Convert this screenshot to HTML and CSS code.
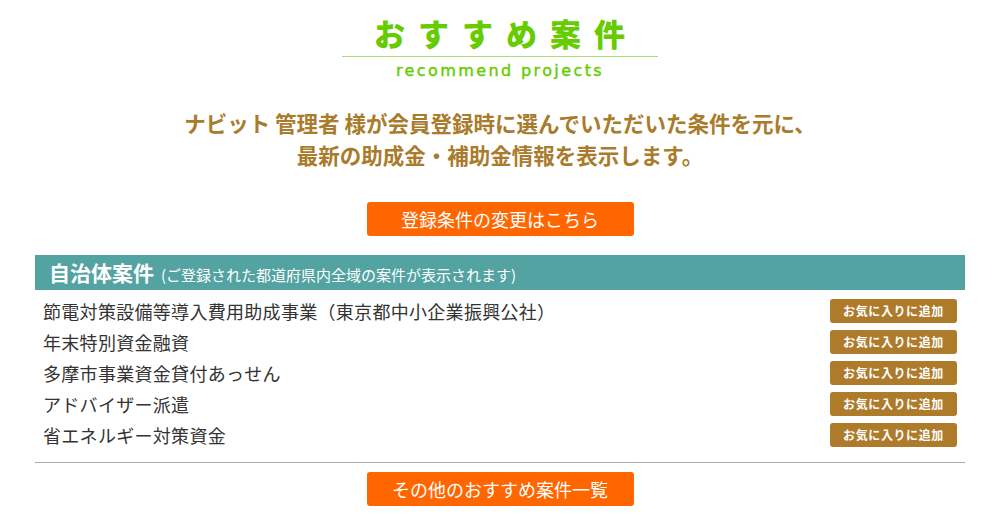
FILE: index.html
```html
<!DOCTYPE html>
<html lang="ja">

<head>
  <meta charset="UTF-8">
  <meta name="viewport" content="width=device-width, initial-scale=1.0">
  <title>おすすめ案件</title>
  <link rel="stylesheet" href="styles.css">
</head>

<body>
  <div class="recommend">
    <div class="recommend__head">
      <h2 class="recommend__title">おすすめ案件</h2>
      <p class="recommend__sub">recommend projects</p>
    </div>

    <p class="intro">ナビット 管理者 様が会員登録時に選んでいただいた条件を元に、<br>最新の助成金・補助金情報を表示します。</p>

    <div class="btn__wrap">
      <a href="/member/edit" class="btn__orange">登録条件の変更はこちら</a>
    </div>

    <div class="box">
      <div class="box__bar">
        <strong>自治体案件</strong>
        <span>(ご登録された都道府県内全域の案件が表示されます)</span>
      </div>
      <ul class="box__list">
        <li>
          <a href="#">節電対策設備等導入費用助成事業（東京都中小企業振興公社）</a>
          <button class="fav">お気に入りに追加</button>
        </li>
        <li>
          <a href="#">年末特別資金融資</a>
          <button class="fav">お気に入りに追加</button>
        </li>
        <li>
          <a href="#">多摩市事業資金貸付あっせん</a>
          <button class="fav">お気に入りに追加</button>
        </li>
        <li>
          <a href="#">アドバイザー派遣</a>
          <button class="fav">お気に入りに追加</button>
        </li>
        <li>
          <a href="#">省エネルギー対策資金</a>
          <button class="fav">お気に入りに追加</button>
        </li>
      </ul>
    </div>

    <div class="btn__wrap btn__wrap--bottom">
      <a href="/projects" class="btn__orange">その他のおすすめ案件一覧</a>
    </div>
  </div>
</body>

</html>
```

FILE: styles.css
```css
body {
  margin: 0;
  background-color: #fff;
  font-family: "Noto Sans CJK JP", "Noto Sans", sans-serif;
  color: #333;
}

.recommend {
  width: 930px;
  margin: 0 auto;
}

.recommend__head {
  display: flex;
  flex-direction: column;
  align-items: center;
  padding-top: 13px;
}

.recommend__title {
  width: 316px;
  margin: 0;
  padding-bottom: 3px;
  padding-left: 12px;
  box-sizing: border-box;
  text-align: center;
  font-size: 31px;
  line-height: 40px;
  font-weight: 900;
  letter-spacing: 13px;
  color: #66cc00;
  border-bottom: 1px solid #a6e070;
}

.recommend__sub {
  margin: 0;
  padding-top: 4px;
  font-family: "DejaVu Sans", sans-serif;
  font-size: 16px;
  line-height: 20px;
  letter-spacing: 2.4px;
  color: #66cc00;
  -webkit-text-stroke: 0.4px #66cc00;
}

.intro {
  margin: 26px 0 0;
  text-align: center;
  font-size: 21.5px;
  line-height: 32px;
  font-weight: 700;
  color: #a97b2b;
}

.btn__wrap {
  display: flex;
  justify-content: center;
  margin-top: 31px;
}

.btn__wrap--bottom {
  margin-top: 9px;
}

.btn__orange {
  display: flex;
  align-items: center;
  justify-content: center;
  width: 267px;
  height: 34px;
  border-radius: 3px;
  background-color: #ff6600;
  color: #fff;
  font-size: 18px;
  text-decoration: none;
}

.box {
  margin-top: 19px;
  border-bottom: 1px solid #aaa;
  padding-bottom: 12px;
}

.box__bar {
  display: flex;
  align-items: baseline;
  height: 35px;
  line-height: 35px;
  padding-left: 14px;
  background-color: #52a3a1;
  color: #fff;
}

.box__bar strong {
  font-size: 21px;
}

.box__bar span {
  margin-left: 7px;
  font-size: 15px;
}

.box__list {
  list-style: none;
  margin: 0;
  padding: 5px 8px 0 8px;
}

.box__list li {
  display: flex;
  align-items: center;
  justify-content: space-between;
  height: 31px;
}

.box__list a {
  color: #333;
  font-size: 18px;
  letter-spacing: 0.3px;
  text-decoration: none;
}

.fav {
  width: 127px;
  height: 24px;
  border: none;
  border-radius: 3px;
  background-color: #ae7b2b;
  color: #fff;
  font-family: inherit;
  font-size: 12px;
  font-weight: 700;
  letter-spacing: 0.6px;
  cursor: pointer;
}
```
